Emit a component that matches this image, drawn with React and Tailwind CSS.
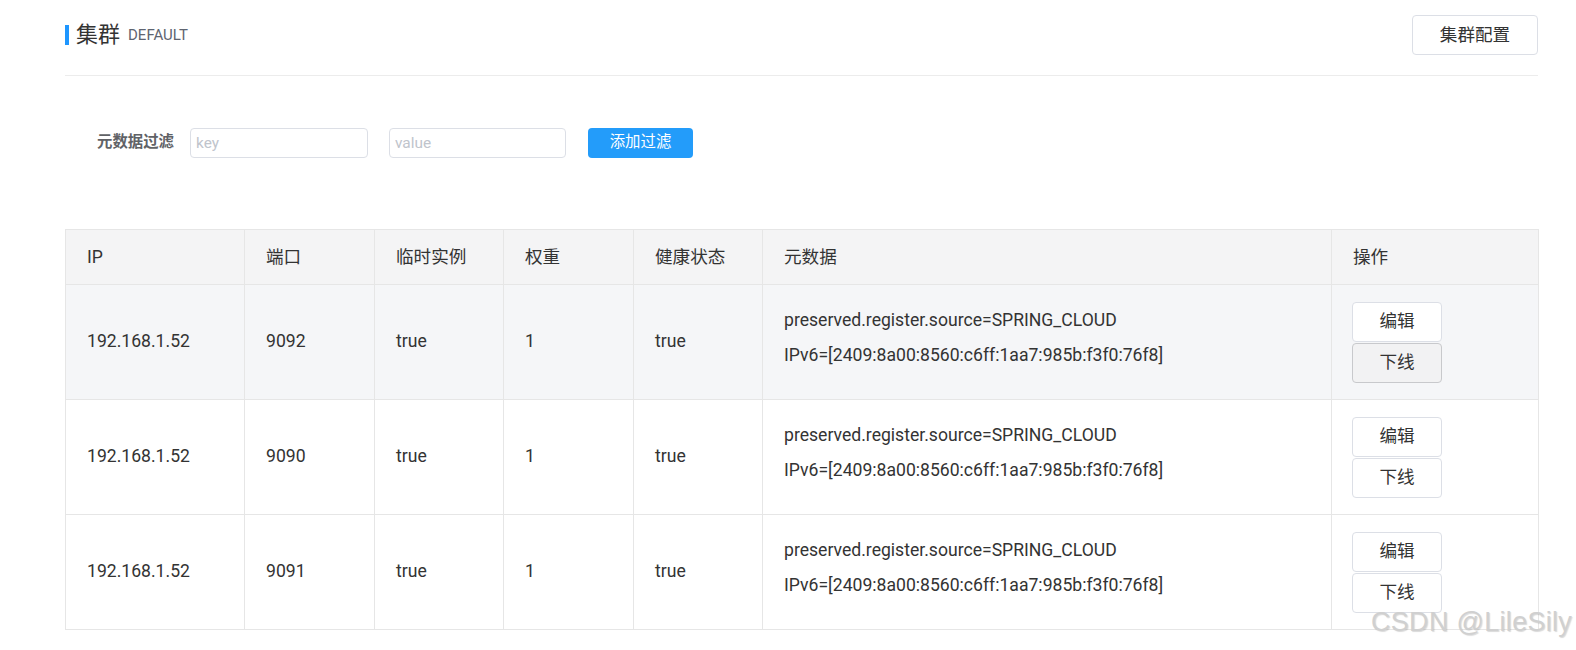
import React from "react";

const rows = [
  { ip: "192.168.1.52", port: "9092", hover: true },
  { ip: "192.168.1.52", port: "9090" },
  { ip: "192.168.1.52", port: "9091" },
];

const font = { fontFamily: 'Roboto, "Noto Sans CJK SC", sans-serif' };

export default function App() {
  return (
    <div className="relative w-[1576px] h-[650px] bg-white overflow-hidden text-[#333]" style={font}>
      <div className="ml-[65px] w-[1473px]">
        {/* header */}
        <div className="flex items-center justify-between pt-[15px] pb-[20px] border-b border-[#ececec]">
          <div className="flex items-center">
            <div className="w-[4px] h-[20px] bg-[#1e96ff]" />
            <span className="ml-[7px] text-[22px] leading-none text-[#333]">集群</span>
            <span className="ml-[8px] text-[15px] leading-none text-[#5e6470]">DEFAULT</span>
          </div>
          <button className="w-[126px] h-[40px] border border-[#dcdfe6] rounded-[4px] bg-white text-[17.6px] text-[#333] flex items-center justify-center">
            集群配置
          </button>
        </div>

        {/* filter */}
        <div className="flex items-center mt-[52px] pl-[32px]">
          <span className="text-[15.4px] font-bold text-[#606266] w-[78px]">元数据过滤</span>
          <input
            placeholder="key"
            className="ml-[15px] w-[178px] h-[30px] border border-[#dcdfe6] rounded-[4px] px-[5px] text-[15.4px] placeholder:text-[#c0c4cc] outline-none"
          />
          <input
            placeholder="value"
            className="ml-[21px] w-[177px] h-[30px] border border-[#dcdfe6] rounded-[4px] px-[5px] text-[15.4px] placeholder:text-[#c0c4cc] outline-none"
          />
          <button className="ml-[22px] w-[105px] h-[30px] rounded-[4px] bg-[#239cfa] text-white text-[15.4px] flex items-center justify-center">
            添加过滤
          </button>
        </div>

        {/* table */}
        <table className="mt-[71px] w-[1473px] border-collapse table-fixed text-[17.6px]">
          <colgroup>
            <col className="w-[179px]" />
            <col className="w-[130px]" />
            <col className="w-[129px]" />
            <col className="w-[130px]" />
            <col className="w-[129px]" />
            <col className="w-[569px]" />
            <col className="w-[207px]" />
          </colgroup>
          <thead>
            <tr className="h-[55px] bg-[#f4f4f5]">
              {["IP", "端口", "临时实例", "权重", "健康状态", "元数据", "操作"].map((h) => (
                <th key={h} className="border border-[#e6e6e6] text-left font-normal pl-[21px] text-[#333]">
                  {h}
                </th>
              ))}
            </tr>
          </thead>
          <tbody>
            {rows.map((r, i) => (
              <tr key={i} className={`h-[115px] ${r.hover ? "bg-[#f5f6f8]" : "bg-white"}`}>
                <td className="border border-[#e6e6e6] pl-[21px] pb-[2px]">{r.ip}</td>
                <td className="border border-[#e6e6e6] pl-[21px] pb-[2px]">{r.port}</td>
                <td className="border border-[#e6e6e6] pl-[21px] pb-[2px]">true</td>
                <td className="border border-[#e6e6e6] pl-[21px] pb-[2px]">1</td>
                <td className="border border-[#e6e6e6] pl-[21px] pb-[2px]">true</td>
                <td className="border border-[#e6e6e6] pl-[21px]">
                  <div className="pb-[8px]">
                    <div className="leading-[35px]">preserved.register.source=SPRING_CLOUD</div>
                    <div className="leading-[35px]">IPv6=[2409:8a00:8560:c6ff:1aa7:985b:f3f0:76f8]</div>
                  </div>
                </td>
                <td className="border border-[#e6e6e6] pl-[20px]">
                  <div className="flex flex-col gap-[1px]">
                    <button className="w-[90px] h-[40px] border border-[#dcdfe6] rounded-[4px] bg-white text-[17.6px] text-[#333] flex items-center justify-center">
                      编辑
                    </button>
                    <button
                      className={`w-[90px] h-[40px] border rounded-[4px] text-[17.6px] text-[#333] flex items-center justify-center ${
                        r.hover ? "bg-[#f2f2f3] border-[#c8c9cc]" : "bg-white border-[#dcdfe6]"
                      }`}
                    >
                      下线
                    </button>
                  </div>
                </td>
              </tr>
            ))}
          </tbody>
        </table>
      </div>

      {/* watermark */}
      <div
        className="absolute left-[1371px] top-[609px] text-[27px] leading-none text-[#d0d0d0] tracking-[0.3px]"
        style={{ fontFamily: '"Liberation Sans", Arial, sans-serif', textShadow: "1px 1px 1px rgba(0,0,0,0.15)" }}
      >
        CSDN @LileSily
      </div>
    </div>
  );
}
